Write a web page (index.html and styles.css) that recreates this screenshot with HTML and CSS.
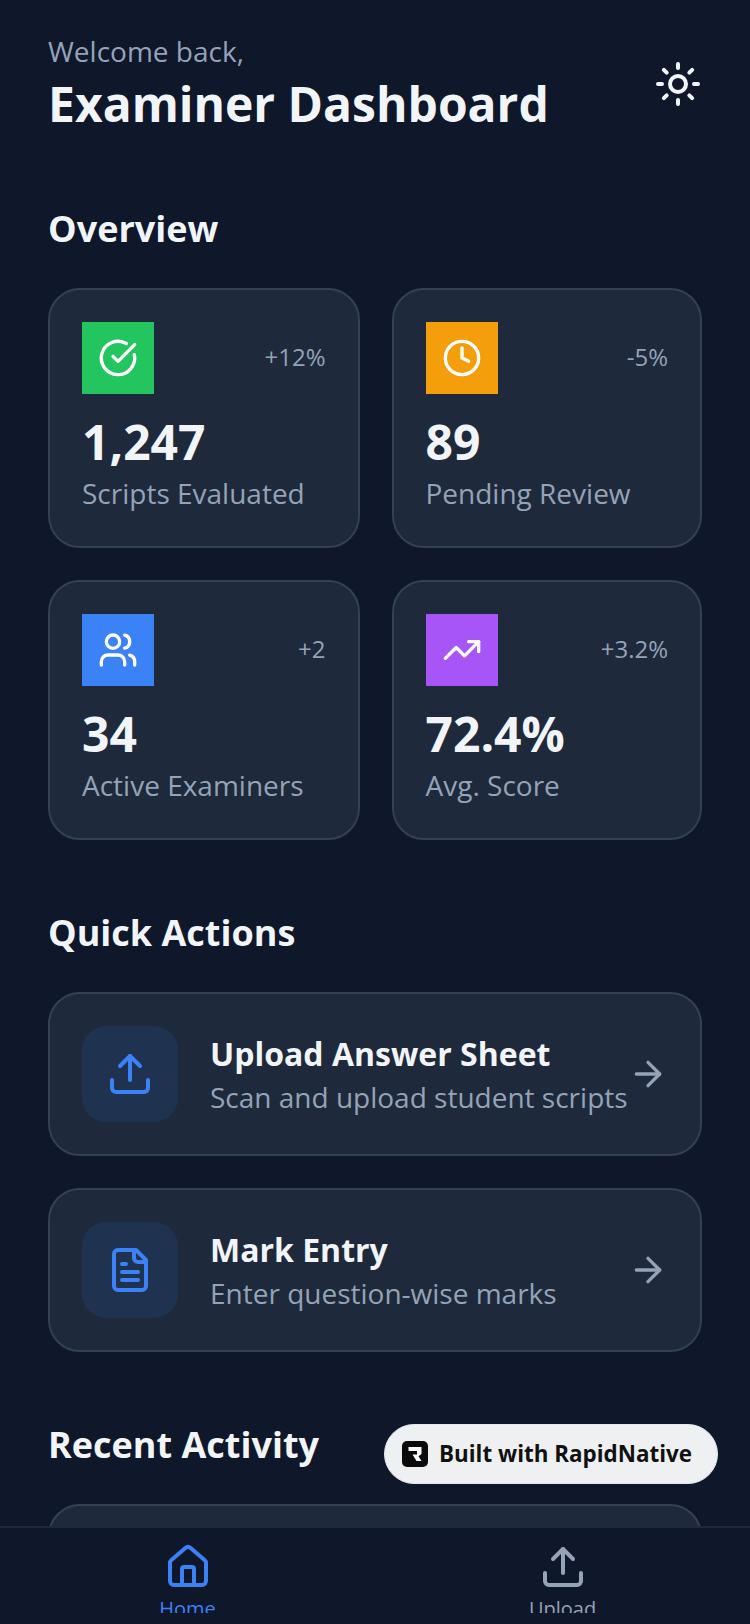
FILE: index.html
```html
<!DOCTYPE html>
<html lang="en">
<head>
<meta charset="utf-8">
<title>Examiner Dashboard</title>
<link rel="stylesheet" href="styles.css">
</head>
<body>
<div class="app">
  <main class="scroll">
    <header class="header">
      <div>
        <p class="welcome">Welcome back,</p>
        <h1 class="title">Examiner Dashboard</h1>
      </div>
      <svg class="icon icon-sun" viewBox="0 0 24 24"><circle cx="12" cy="12" r="4"/><path d="M12 2v2M12 20v2M4.93 4.93l1.41 1.41M17.66 17.66l1.41 1.41M2 12h2M20 12h2M6.34 17.66l-1.41 1.41M19.07 4.93l-1.41 1.41"/></svg>
    </header>

    <h2 class="section-title overview">Overview</h2>
    <section class="stats">
      <article class="card stat">
        <div class="stat-top">
          <div class="stat-icon green"><svg class="icon icon-40" viewBox="0 0 24 24"><path d="M21.801 10A10 10 0 1 1 17 3.335"/><path d="m9 11 3 3L22 4"/></svg></div>
          <span class="delta">+12%</span>
        </div>
        <div class="stat-value">1,247</div>
        <div class="stat-label">Scripts Evaluated</div>
      </article>
      <article class="card stat">
        <div class="stat-top">
          <div class="stat-icon amber"><svg class="icon icon-40" viewBox="0 0 24 24"><circle cx="12" cy="12" r="10"/><path d="M12 6v6l4 2"/></svg></div>
          <span class="delta">-5%</span>
        </div>
        <div class="stat-value">89</div>
        <div class="stat-label">Pending Review</div>
      </article>
      <article class="card stat">
        <div class="stat-top">
          <div class="stat-icon blue"><svg class="icon icon-40" viewBox="0 0 24 24"><path d="M16 21v-2a4 4 0 0 0-4-4H6a4 4 0 0 0-4 4v2"/><circle cx="9" cy="7" r="4"/><path d="M22 21v-2a4 4 0 0 0-3-3.87"/><path d="M16 3.13a4 4 0 0 1 0 7.75"/></svg></div>
          <span class="delta">+2</span>
        </div>
        <div class="stat-value">34</div>
        <div class="stat-label">Active Examiners</div>
      </article>
      <article class="card stat">
        <div class="stat-top">
          <div class="stat-icon purple"><svg class="icon icon-40" viewBox="0 0 24 24"><path d="M22 7l-8.500 8.500-5-5L2 17"/><path d="M16 7h6v6"/></svg></div>
          <span class="delta">+3.2%</span>
        </div>
        <div class="stat-value">72.4%</div>
        <div class="stat-label">Avg. Score</div>
      </article>
    </section>

    <h2 class="section-title quick">Quick Actions</h2>
    <section class="actions">
      <article class="card action">
        <div class="action-icon"><svg class="icon icon-48" viewBox="0 0 24 24"><path d="M21 15v4a2 2 0 0 1-2 2H5a2 2 0 0 1-2-2v-4"/><path d="M17 8l-5-5-5 5"/><path d="M12 3v12"/></svg></div>
        <div class="action-text">
          <div class="action-title">Upload Answer Sheet</div>
          <div class="action-sub">Scan and upload student scripts</div>
        </div>
        <svg class="icon icon-arrow" viewBox="0 0 24 24"><path d="M5 12h14"/><path d="m12 5 7 7-7 7"/></svg>
      </article>
      <article class="card action">
        <div class="action-icon"><svg class="icon icon-48" viewBox="0 0 24 24"><path d="M15 2H6a2 2 0 0 0-2 2v16a2 2 0 0 0 2 2h12a2 2 0 0 0 2-2V7Z"/><path d="M14 2v4a2 2 0 0 0 2 2h4"/><path d="M10 9H8M16 13H8M16 17H8"/></svg></div>
        <div class="action-text">
          <div class="action-title">Mark Entry</div>
          <div class="action-sub">Enter question-wise marks</div>
        </div>
        <svg class="icon icon-arrow" viewBox="0 0 24 24"><path d="M5 12h14"/><path d="m12 5 7 7-7 7"/></svg>
      </article>
    </section>

    <h2 class="section-title recent">Recent Activity</h2>
    <section class="card activity"></section>
  </main>

  <nav class="tabbar">
    <div class="tab active">
      <svg class="icon icon-48" viewBox="0 0 24 24"><path d="M15 21v-8a1 1 0 0 0-1-1h-4a1 1 0 0 0-1 1v8"/><path d="M3 10a2 2 0 0 1 .709-1.528l7-5.999a2 2 0 0 1 2.582 0l7 5.999A2 2 0 0 1 21 10v9a2 2 0 0 1-2 2H5a2 2 0 0 1-2-2z"/></svg>
      <span class="tab-label">Home</span>
    </div>
    <div class="tab">
      <svg class="icon icon-48" viewBox="0 0 24 24"><path d="M21 15v4a2 2 0 0 1-2 2H5a2 2 0 0 1-2-2v-4"/><path d="M17 8l-5-5-5 5"/><path d="M12 3v12"/></svg>
      <span class="tab-label">Upload</span>
    </div>
  </nav>

  <div class="built">
    <svg class="built-logo" viewBox="0 0 26 26"><rect width="26" height="26" rx="5" fill="#0b0b0b"/><path d="M6.500 6h13v7l-3 2.200 3 4.800h-5l-4-6.500h4.500V10h-8.500z" fill="#fff"/></svg>
    <span>Built with RapidNative</span>
  </div>
</div>
</body>
</html>
```

FILE: styles.css
```css
* { box-sizing: border-box; margin: 0; padding: 0; }
html, body { width: 750px; height: 1624px; overflow: hidden; background: #0f172a; }
body { font-family: "Open Sans", "Noto Sans", sans-serif; color: #f1f5f9; }

.app { position: relative; width: 750px; height: 1624px; display: flex; flex-direction: column; overflow: hidden; }
.scroll { flex: 1; min-height: 0; overflow: hidden; padding: 32px 48px 0; }

.icon { display: block; fill: none; stroke: currentColor; stroke-width: 2; stroke-linecap: round; stroke-linejoin: round; flex: none; }
.icon-40 { width: 40px; height: 40px; }
.icon-48 { width: 48px; height: 48px; }
.icon-sun { width: 48px; height: 48px; color: #f1f5f9; }
.icon-arrow { width: 40px; height: 40px; color: #94a3b8; }

.header { display: flex; justify-content: space-between; align-items: center; }
.welcome { font-size: 28px; line-height: 40px; color: #94a3b8; margin-top: -1px; }
.title { font-size: 48px; line-height: 64px; font-weight: 700; color: #f1f5f9; margin-top: 1px; }

.section-title { font-size: 36px; line-height: 54px; font-weight: 700; color: #f1f5f9; }
.overview { margin-top: 66px; margin-bottom: 32px; }
.quick { margin-top: 66px; margin-bottom: 32px; }
.recent { margin-top: 66px; margin-bottom: 32px; }

.card { background: #1e293b; border: 2px solid #334155; border-radius: 32px; }

.stats { display: grid; grid-template-columns: 311.5px 310.5px; gap: 32px; }
.stat { padding: 32px; height: 260px; }
.stat-top { display: flex; justify-content: space-between; align-items: center; margin-bottom: 16px; }
.stat-icon { width: 72px; height: 72px; display: flex; align-items: center; justify-content: center; color: #fff; }
.green { background: #22c55e; }
.amber { background: #f59e0b; }
.blue { background: #3b82f6; }
.purple { background: #a855f7; }
.delta { font-size: 24px; line-height: 32px; color: #94a3b8; margin-top: -2px; }
.stat-value { font-size: 48px; line-height: 64px; font-weight: 700; color: #f1f5f9; }
.stat-label { font-size: 28px; line-height: 40px; color: #94a3b8; margin-top: -1px; }

.actions { display: flex; flex-direction: column; gap: 32px; }
.action { display: flex; align-items: center; padding: 32px; height: 164px; }
.action-icon { width: 96px; height: 96px; border-radius: 24px; background: #1f3250; display: flex; align-items: center; justify-content: center; color: #3b82f6; margin-right: 32px; flex: none; }
.action-text { flex: 1; min-width: 0; }
.action-title { font-size: 32px; line-height: 44px; font-weight: 700; color: #f1f5f9; }
.action-sub { font-size: 28px; line-height: 40px; color: #94a3b8; white-space: nowrap; padding-top: 1px; margin-bottom: -1px; }

.activity { height: 200px; }

.tabbar { flex: none; height: 98px; display: flex; background: #0f172a; border-top: 2px solid #1e293b; padding-top: 15px; position: relative; z-index: 1; }
.tab { flex: 1; height: 70px; overflow: hidden; display: flex; flex-direction: column; align-items: center; color: #94a3b8; }
.tab.active { color: #3b82f6; }
.tab-label { font-size: 20px; line-height: 28px; margin-top: 4px; }

.built { position: absolute; z-index: 2; left: 384px; top: 1424px; width: 334px; height: 60px; border-radius: 30px; background: #eff0f2; border: 1px solid #e2e8f0; display: flex; align-items: center; padding: 0 0 2px 17px; gap: 11px; color: #111; font-size: 22.4px; font-weight: 700; }
.built-logo { width: 26px; height: 26px; flex: none; margin-top: 2px; }
```
